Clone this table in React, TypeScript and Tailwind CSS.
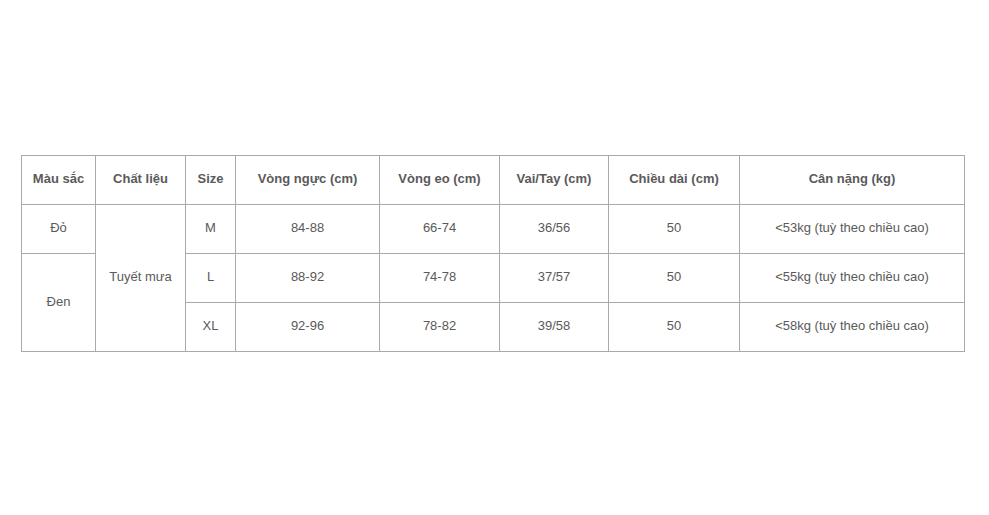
import React from "react";

const rows = [
  { size: "M", chest: "84-88", waist: "66-74", arm: "36/56", len: "50", w: "<53kg (tuỳ theo chiều cao)" },
  { size: "L", chest: "88-92", waist: "74-78", arm: "37/57", len: "50", w: "<55kg (tuỳ theo chiều cao)" },
  { size: "XL", chest: "92-96", waist: "78-82", arm: "39/58", len: "50", w: "<58kg (tuỳ theo chiều cao)" },
];

const td = "border border-[#a9a9a9] text-center align-middle px-0 pt-0 pb-[2px]";

export default function App() {
  return (
    <div className="w-[989px] h-[515px] bg-white pt-[155px] pl-[21px] text-[13px] text-[#5a5a5a]" style={{ fontFamily: '"Liberation Sans", Arial, sans-serif' }}>
      <table className="border-collapse border border-[#999999] table-fixed w-[943px]">
        <colgroup>
          <col className="w-[74px]" />
          <col className="w-[90px]" />
          <col className="w-[50px]" />
          <col className="w-[144px]" />
          <col className="w-[120px]" />
          <col className="w-[109px]" />
          <col className="w-[131px]" />
          <col className="w-[225px]" />
        </colgroup>
        <tbody>
          <tr className="h-[49px] font-bold">
            <td className={td}>Màu sắc</td>
            <td className={td}>Chất liệu</td>
            <td className={td}>Size</td>
            <td className={td}>Vòng ngực (cm)</td>
            <td className={td}>Vòng eo (cm)</td>
            <td className={td}>Vai/Tay (cm)</td>
            <td className={td}>Chiều dài (cm)</td>
            <td className={td}>Cân nặng (kg)</td>
          </tr>
          {rows.map((r, i) => (
            <tr key={r.size} className="h-[49px]">
              {i === 0 && <td className={td}>Đỏ</td>}
              {i === 1 && <td className={td} rowSpan={2}>Đen</td>}
              {i === 0 && <td className={td} rowSpan={3}>Tuyết mưa</td>}
              <td className={td}>{r.size}</td>
              <td className={td}>{r.chest}</td>
              <td className={td}>{r.waist}</td>
              <td className={td}>{r.arm}</td>
              <td className={td}>{r.len}</td>
              <td className={td}>{r.w}</td>
            </tr>
          ))}
        </tbody>
      </table>
    </div>
  );
}
